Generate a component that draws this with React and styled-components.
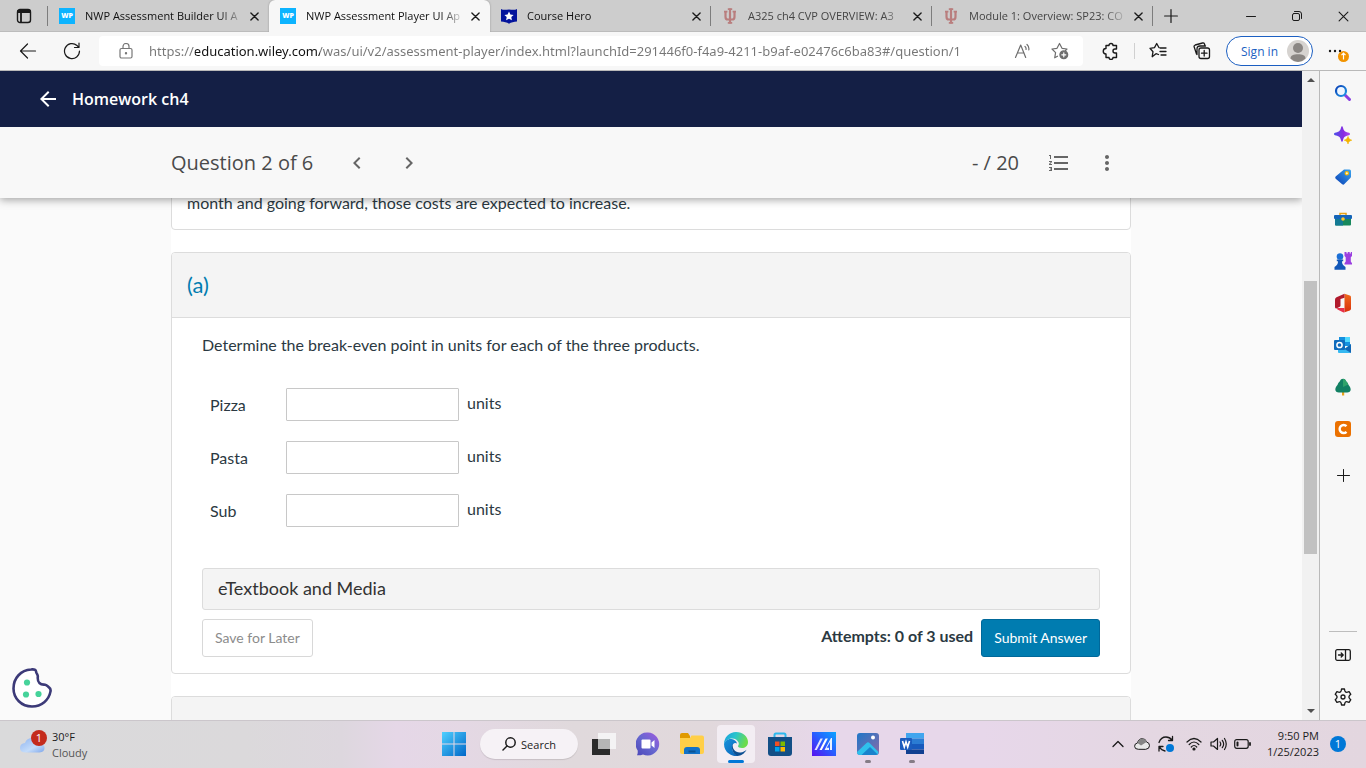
import React from "react";
import styled, { createGlobalStyle } from "styled-components";
import {
  MdArrowBack,
  MdChevronLeft,
  MdChevronRight,
  MdFormatListNumbered,
  MdMoreVert,
} from "react-icons/md";

const UI = `"Open Sans", "Noto Sans", sans-serif`;
const LATO = `Lato, "Open Sans", sans-serif`;

const GlobalStyle = createGlobalStyle`
  * { box-sizing: border-box; }
  body { margin: 0; font-family: ${UI}; overflow: hidden; }
  button, input { font: inherit; color: inherit; }
  button { border: 0; padding: 0; margin: 0; background: none; cursor: pointer; }
  svg { display: block; flex: none; }
`;

const Screen = styled.div`
  height: 100vh;
  display: flex;
  flex-direction: column;
  background: #f7f7f7;
`;

/* ---------- Tab strip ---------- */
const TabStrip = styled.header`
  display: flex;
  height: 32px;
  flex: none;
  background: #cdcdcd;
  box-shadow: inset 0 -1px 0 #bcbcbc;
  font-size: 11px;
  color: #111;
`;
const TabActions = styled.button`
  width: 48px;
  display: flex;
  align-items: center;
  justify-content: center;
`;
const Tab = styled.div`
  flex: 0 1 221px;
  min-width: 0;
  display: flex;
  align-items: center;
  padding: 0 5px 0 11px;
  background: ${(p) => (p.$active ? "#f7f7f7" : "transparent")};
  border-radius: ${(p) => (p.$active ? "6px 6px 0 0" : "0")};
  box-shadow: ${(p) => (p.$active ? "0 0 2px #8c8c8c" : "none")};
  clip-path: ${(p) => (p.$active ? "inset(0 -3px 0 -3px)" : "none")};
`;
const TabLabel = styled.button`
  flex: 1;
  min-width: 0;
  display: flex;
  align-items: center;
  gap: 10px;
  text-align: left;
`;
const TabTitle = styled.span`
  flex: 1;
  min-width: 0;
  overflow: hidden;
  white-space: nowrap;
  line-height: 16px;
  color: ${(p) => (p.$dim ? "#444" : "#111")};
  mask-image: linear-gradient(to right, #000 calc(100% - 24px), transparent);
`;
const TabClose = styled.button`
  width: 20px;
  height: 20px;
  display: flex;
  align-items: center;
  justify-content: center;
`;
const Divider = styled.span`
  width: 1px;
  height: 20px;
  margin: 6px 0 6px -1px;
  flex: none;
  background: ${(p) => (p.$clear ? "transparent" : "#7d7d7d")};
`;
const NewTab = styled.button`
  width: 36px;
  display: flex;
  align-items: center;
  justify-content: center;
`;
const WindowControls = styled.div`
  margin-left: auto;
  display: flex;
`;
const WindowButton = styled.button`
  width: 46px;
  display: flex;
  align-items: center;
  justify-content: center;
`;

/* ---------- Address bar ---------- */
const Toolbar = styled.nav`
  display: flex;
  align-items: center;
  height: 39px;
  flex: none;
  padding: 0 6px;
  background: #f7f7f7;
  border-bottom: 1px solid #b9b9b9;
`;
const ToolButton = styled.button`
  width: ${(p) => p.$w || 44}px;
  height: 30px;
  display: flex;
  align-items: center;
  justify-content: center;
`;
const AddressBar = styled.div`
  flex: 1;
  min-width: 0;
  height: 30px;
  margin: 0 6px 0 5px;
  padding: 0 4px 0 19px;
  display: flex;
  align-items: center;
  background: #fff;
  border-radius: 4px;
`;
const Url = styled.input`
  flex: 1;
  min-width: 0;
  margin-left: 15px;
  padding: 0;
  border: 0;
  outline: 0;
  height: 24px;
  font-family: "Noto Sans", sans-serif;
  font-size: 13px;
  color: #767676;
  -webkit-text-fill-color: transparent;
  background: linear-gradient(to right, #767676 46px, #111 46px, #111 171px, #767676 171px);
  background-clip: text;
  -webkit-background-clip: text;
`;
const ToolDivider = styled.span`
  width: 1px;
  height: 16px;
  margin: 0 1px;
  background: #d0d0d0;
`;
const SignIn = styled.button`
  width: 87px;
  height: 30px;
  margin: 0 3px 0 2px;
  padding: 0 3px 0 14px;
  display: flex;
  align-items: center;
  justify-content: space-between;
  white-space: nowrap;
  border: 1px solid #1c5fc2;
  border-radius: 15px;
  background: #fff;
  color: #1c5fc2;
  font-size: 12px;
`;

/* ---------- Body ---------- */
const Main = styled.div`
  flex: 1;
  min-height: 0;
  display: flex;
`;
const Viewport = styled.main`
  position: relative;
  flex: 1;
  min-width: 0;
  display: flex;
  flex-direction: column;
  background: #fafafa;
`;
const CourseBar = styled.div`
  height: 56px;
  flex: none;
  display: flex;
  align-items: center;
  gap: 12px;
  padding-left: 36px;
  background: #141f45;
  color: #fff;
`;
const CourseTitle = styled.h1`
  margin: 0;
  font-size: 16px;
  font-weight: 600;
`;
const IconButton = styled.button`
  width: ${(p) => p.$w}px;
  height: 40px;
  display: flex;
  align-items: center;
  justify-content: center;
  color: inherit;
`;
const QuestionBar = styled.div`
  position: relative;
  z-index: 1;
  height: 71px;
  flex: none;
  background: #f8f8f8;
  box-shadow: 0 2px 8px rgba(0, 0, 0, 0.35);
  clip-path: inset(0 0 -12px 0);
`;
const QuestionInner = styled.div`
  max-width: 960px;
  height: 100%;
  margin: 0 auto;
  display: flex;
  align-items: center;
  font-size: 20px;
  color: #4a4a4a;
`;
const QuestionTitle = styled.h2`
  margin: 0 24px 0 0;
  font-size: 20px;
  font-weight: 400;
`;
const QuestionNav = styled.div`
  display: flex;
  gap: 12px;
  color: #666;
`;
const QuestionTools = styled.div`
  margin-left: auto;
  display: flex;
  align-items: center;
  color: #666;
`;
const Score = styled.span`
  margin-right: 16px;
  color: #4a4a4a;
`;
const ScrollArea = styled.div`
  flex: 1;
  min-height: 0;
  overflow: hidden;
`;
const Column = styled.div`
  max-width: 960px;
  margin: -24px auto 0;
  display: flex;
  flex-direction: column;
  gap: 22px;
  background: #fff;
  font-family: ${LATO};
  font-size: 16px;
  line-height: 24px;
  color: #2b3942;
`;
const Card = styled.section`
  border: 1px solid #dcdcdc;
  border-radius: 4px;
  background: #fff;
  overflow: hidden;
`;
const Intro = styled.p`
  margin: 0;
  padding: 16px 15px 14px;
`;
const CardHeader = styled.div`
  height: 65px;
  padding: 0 15px;
  display: flex;
  align-items: center;
  background: #f4f4f4;
  border-bottom: 1px solid #dcdcdc;
`;
const PartTitle = styled.h3`
  margin: 0;
  font-size: 22px;
  font-weight: 400;
  color: #007cb0;
`;
const CardBody = styled.form`
  padding: 15px 30px 16px;
`;
const Prompt = styled.p`
  margin: 0 0 21px;
`;
const AnswerTable = styled.table`
  border-collapse: collapse;
  margin: 0 0 31px 8px;
  th, td { height: 53px; padding: 0; vertical-align: middle; text-align: left; font-weight: 400; }
  th { width: 76px; }
  td:last-child { padding-bottom: 4px; }
`;
const Answer = styled.input`
  display: block;
  width: 173px;
  height: 33px;
  margin-right: 8px;
  padding: 4px 8px;
  border: 1px solid #c8c8c8;
  border-radius: 1px;
  background: #fff;
`;
const Resource = styled.button`
  display: block;
  width: 100%;
  height: 42px;
  margin-bottom: 9px;
  padding: 0 15px 2px;
  text-align: left;
  font-size: 18px;
  border: 1px solid #dcdcdc;
  border-radius: 3px;
  background: #f4f4f4;
  color: #333;
`;
const Actions = styled.div`
  display: flex;
  align-items: center;
`;
const ActionButton = styled.button`
  height: 38px;
  padding: 0 12px;
  font-size: 14px;
  border-radius: 3px;
  border: 1px solid ${(p) => (p.$primary ? "#00689a" : "#d8d8d8")};
  background: ${(p) => (p.$primary ? "#007cb0" : "#fff")};
  color: ${(p) => (p.$primary ? "#fff" : "#8c8c8c")};
`;
const Attempts = styled.strong`
  margin: 0 8px 0 auto;
  padding-bottom: 4px;
`;
const CookieButton = styled.button`
  position: absolute;
  left: 12px;
  bottom: 12px;
`;

/* ---------- Scrollbar and sidebar ---------- */
const ScrollTrack = styled.div`
  width: 17px;
  flex: none;
  display: flex;
  flex-direction: column;
  align-items: center;
  background: #f1f1f1;
`;
const ScrollArrow = styled.span`
  height: 17px;
  flex: none;
  display: flex;
  align-items: center;
`;
const ScrollSpace = styled.span`
  flex: ${(p) => p.$share} 1 0;
`;
const ScrollThumb = styled.span`
  flex: 273 1 0;
  width: 13px;
  background: #c1c1c1;
`;
const Sidebar = styled.aside`
  width: 47px;
  flex: none;
  padding: 1px 0 2px;
  display: flex;
  flex-direction: column;
  align-items: center;
  border-left: 1px solid #b9b9b9;
  background: #f7f7f7;
`;
const SideButton = styled.button`
  width: 42px;
  height: ${(p) => p.$h || 42}px;
  flex: none;
  display: flex;
  align-items: center;
  justify-content: center;
`;
const SideRule = styled.span`
  width: 28px;
  height: 1px;
  flex: none;
  margin: auto 0 2px;
  background: #bdbdbd;
`;

/* ---------- Taskbar ---------- */
const Taskbar = styled.footer`
  height: 48px;
  flex: none;
  display: grid;
  grid-template-columns: 1fr auto 1fr;
  align-items: center;
  box-shadow: inset 0 1px 0 #cbc6cb;
  background: linear-gradient(to right, #dadadb 0, #dbd9db 18%, #ddd7de 25%, #e5d7e7 29%, #e4d8e4 34%, #e0d9dc 42%, #e1d8dc 52%, #e7d7ea 61%, #e7d7ea 72%, #e4d7e2 84%, #e3d6df 100%);
  font-size: 11px;
  color: #1c1c1c;
`;
const Weather = styled.button`
  justify-self: start;
  display: flex;
  align-items: center;
  gap: 4px;
  padding: 1px 0 0 19px;
  text-align: left;
  line-height: 16px;
`;
const WeatherLine = styled.span`
  display: block;
  color: ${(p) => (p.$muted ? "#555" : "#1c1c1c")};
`;
const Apps = styled.div`
  display: flex;
  align-items: center;
`;
const AppButton = styled.button`
  position: relative;
  width: 38px;
  height: 38px;
  margin: 0 3px;
  display: flex;
  align-items: center;
  justify-content: center;
  border-radius: 4px;
  background: ${(p) => (p.$active ? "#f3edf3" : "transparent")};
  &::after {
    content: "";
    position: absolute;
    bottom: 0;
    width: ${(p) => (p.$active ? 16 : 6)}px;
    height: 3px;
    border-radius: 2px;
    background: ${(p) => (p.$active ? "#0078d7" : p.$running ? "#857c86" : "transparent")};
  }
`;
const SearchPill = styled.button`
  width: 98px;
  height: 30px;
  margin: 0 4px;
  display: flex;
  align-items: center;
  justify-content: center;
  gap: 5px;
  border-radius: 15px;
  background: #f6f2f6;
  box-shadow: 0 1px 1px rgba(0, 0, 0, 0.12);
`;
const Tray = styled.div`
  justify-self: end;
  display: flex;
  align-items: center;
  padding-right: 20px;
`;
const TrayGroup = styled.div`
  display: flex;
  margin-right: ${(p) => p.$gap || 0}px;
`;
const TrayButton = styled.button`
  width: 24px;
  height: 32px;
  display: flex;
  align-items: center;
  justify-content: center;
`;
const Clock = styled.time`
  width: 65px;
  text-align: right;
  line-height: 16px;
`;
const Count = styled.span`
  width: 16px;
  height: 16px;
  margin-left: 11px;
  border-radius: 50%;
  background: #0078d7;
  color: #fff;
  text-align: center;
  font-size: 11px;
  line-height: 16px;
`;

/* ---------- Drawings ---------- */
const Line = ({ w = 20, h, vb, sw = 1.2, color = "#1a1a1a", children }) => (
  <svg width={w} height={h || w} viewBox={vb || `0 0 ${w} ${h || w}`} fill="none" stroke={color}
    strokeWidth={sw} strokeLinecap="round" strokeLinejoin="round" aria-hidden="true">
    {children}
  </svg>
);
const Art = ({ w = 18, h, vb, children }) => (
  <svg width={w} height={h || w} viewBox={vb || `0 0 ${w} ${h || w}`} aria-hidden="true">
    {children}
  </svg>
);

const CloseX = ({ s = 9, sw = 1.5 }) => (
  <Line w={s} vb="0 0 10 10" sw={sw}><path d="M1 1l8 8M9 1L1 9" /></Line>
);

const WpMark = styled.span`
  width: 16px;
  height: 16px;
  flex: none;
  background: #0db4ff;
  color: #fff;
  font-size: 7px;
  font-weight: 800;
  line-height: 16px;
  text-align: center;
`;
const HeroMark = () => (
  <Art w={16}>
    <path d="M0 1c3 1.6 5.500 .4 8 .4S13 2.600 16 1v12.500c-3 .2-6 .8-8 2.300-2-1.500-5-2.100-8-2.300z" fill="#04149c" />
    <path d="M8 3.600l1.400 2.900 3.200.4-2.300 2.200.6 3.200L8 10.700l-2.900 1.600.6-3.200-2.300-2.200 3.200-.4z" fill="#fff" />
  </Art>
);
const TridentMark = () => (
  <Art w={16}>
    <g fill="none" stroke="#b97e7e" strokeWidth="2.200">
      <path d="M8 .5v15M3.500 3.500v5.200c0 2 1 2.800 2.300 2.800h4.400c1.300 0 2.300-.8 2.300-2.800V3.500" />
    </g>
    <path d="M5.800.3h4.400v1.600H5.800zM2 2.800h3.400v1.600H2zM10.600 2.800H14v1.600h-3.400zM5.800 14h4.400v1.700H5.800z" fill="#b97e7e" />
  </Art>
);

const tabs = [
  { title: "NWP Assessment Builder UI A", icon: <WpMark>WP</WpMark>, hideDivider: true },
  { title: "NWP Assessment Player UI Ap", icon: <WpMark>WP</WpMark>, active: true, hideDivider: true },
  { title: "Course Hero", icon: <HeroMark /> },
  { title: "A325 ch4 CVP OVERVIEW: A3", icon: <TridentMark />, dim: true },
  { title: "Module 1: Overview: SP23: CO", icon: <TridentMark />, dim: true },
];

const Avatar = () => (
  <Art w={22}>
    <circle cx="11" cy="11" r="11" fill="#d6d3d0" />
    <circle cx="11" cy="8" r="5" fill="#8a8683" />
    <path d="M3.500 18.500c0-3 3-4.300 7.500-4.300s7.500 1.300 7.500 4.300A11 11 0 0 1 11 22a11 11 0 0 1-7.500-3.500z" fill="#8a8683" />
  </Art>
);

const sideIcons = [
  ["Search", <Art key="s">
    <defs><linearGradient id="sg" x2="1" y2="1"><stop stopColor="#0a3fb5" /><stop offset="1" stopColor="#1f9be8" /></linearGradient></defs>
    <path d="M11 11l4.500 4.500" stroke="#8a3de0" strokeWidth="3" strokeLinecap="round" />
    <circle cx="7" cy="7" r="5" fill="#eef6ff" stroke="url(#sg)" strokeWidth="2.200" />
  </Art>],
  ["Discover", <Art key="d">
    <defs><linearGradient id="dg" x2="1"><stop stopColor="#4a50e8" /><stop offset=".6" stopColor="#8a2be2" /><stop offset="1" stopColor="#b04cf0" /></linearGradient></defs>
    <path d="M8 .3c.5 0 .8.6 1 1.500.8 3 1.700 3.900 5 4.700 1.400.3 2 .8 2 1.500s-.6 1.200-2 1.500c-3.300.8-4.200 1.700-5 4.700-.2.900-.5 1.500-1 1.500s-.8-.6-1-1.500c-.8-3-1.700-3.900-5-4.700C.6 9.200 0 8.700 0 8s.6-1.200 2-1.500c3.300-.8 4.200-1.700 5-4.700.2-.9.5-1.500 1-1.500z" fill="url(#dg)" />
    <path d="M14 10.500c.5 2.100 1.300 3 3.700 3.700-2.400.7-3.200 1.500-3.700 3.700-.5-2.200-1.300-3-3.700-3.700 2.400-.7 3.200-1.600 3.700-3.700z" fill="#f4b400" stroke="#f4b400" strokeWidth=".7" />
  </Art>],
  ["Shopping", <Art key="t">
    <defs><linearGradient id="tg" x1="1" x2="0" y2="1"><stop stopColor="#3aa4ee" /><stop offset="1" stopColor="#0a3fb5" /></linearGradient></defs>
    <path d="M10 1.500h5.500q1.500 0 1.500 1.500v5.500q0 .8-.6 1.400l-6 6.200q-1 1-2.200.1L1.700 10.700q-1-1-.1-2.200z" fill="url(#tg)" />
    <circle cx="12.800" cy="5.300" r="1.700" fill="#fff3c4" stroke="#f0b400" strokeWidth="1.100" />
  </Art>],
  ["Tools", <Art key="b">
    <path d="M6 5V3.500h6V5" fill="none" stroke="#e8a317" strokeWidth="1.500" />
    <rect x="0" y="5" width="18" height="4" rx="1" fill="#1464b8" />
    <path d="M1 9h16v5.500q0 1-1 1H2q-1 0-1-1z" fill="#17885c" /><path d="M1 9h8v6.500H2q-1 0-1-1z" fill="#137a94" />
    <circle cx="9" cy="9" r="1.800" fill="#ffc629" />
  </Art>],
  ["Games", <Art key="g">
    <path d="M10.500 0h2v1.500h1.200V0h2v1.500h1.100V0H18v4l-1.200 1.200v4.300l1.200 1.700v1.300h-7.500v-1.300l1.200-1.700V5.200L10.500 4z" fill="#9b3fe0" />
    <circle cx="6" cy="4.500" r="3.300" fill="#1b6fd6" />
    <path d="M2.800 7.500h6.400V9.300H8c0 2 .6 3.500 2.200 4.700l1.300 1v2.800H.5V15l1.300-1C3.400 12.800 4 11.300 4 9.300H2.800z" fill="#1257b8" />
  </Art>],
  ["Office", <Art key="o" h={20}>
    <defs><linearGradient id="og" x2="0" y2="1"><stop stopColor="#f06a1c" /><stop offset="1" stopColor="#d8300a" /></linearGradient></defs>
    <path d="M10.500.8l5.300 1.700q1.200.4 1.200 1.700v11.600q0 1.300-1.200 1.700l-5.300 1.700z" fill="url(#og)" />
    <path d="M10.500.8v4L6.500 6v6.700q0 .7-.7 1l-2.900 1.500Q1 16 1 14V6.800q0-1.700 1.500-2.500z" fill="#b01a2c" />
    <path d="M3.500 15h7v4.200q-1 .4-2-.1l-5-2.500q-1.200-.9 0-1.600z" fill="#e8304a" />
  </Art>],
  ["Outlook", <Art key="ol">
    <path d="M5 1h11v9H5z" fill="#1490df" /><path d="M11 1h5v5h-5z" fill="#50d9ff" /><path d="M4 9l6.500 4L17 8v8q0 1-1 1H5q-1 0-1-1z" fill="#35b8f1" />
    <path d="M10.500 13L17 8v9z" fill="#1066b5" />
    <rect x="0" y="4" width="11" height="10" rx="1" fill="#0f6cbd" />
    <circle cx="5.500" cy="9" r="2.600" fill="none" stroke="#fff" strokeWidth="1.500" />
  </Art>],
  ["Tree", <Art key="tr">
    <path d="M8 13h2.200v4.500H8z" fill="#e9a21b" />
    <path d="M9 .8c1.400 0 2.400.9 3 2.200.5 1 2.100 2 2.300 3.500.2 1 2.400 2.300 2.400 4.800 0 2.200-1.600 3.200-3.500 3.200H4.800c-1.900 0-3.500-1-3.500-3.200 0-2.500 2.200-3.800 2.400-4.800C3.900 5 5.500 4 6 3 6.600 1.700 7.600.8 9 .8z" fill="#128063" />
    <path d="M9 .8c1.400 0 2.400.9 3 2.200.5 1 2.100 2 2.300 3.500L9 9z" fill="#2fa36b" />
  </Art>],
  ["Chegg", <Art key="c" w={16}>
    <rect width="16" height="16" rx="3" fill="#eb7100" />
    <path d="M11.500 5.200A4 4 0 1 0 11.500 10.800" fill="none" stroke="#fff" strokeWidth="2.400" />
  </Art>],
];

const Windows = () => (
  <Art w={24}>
    <defs><linearGradient id="wg" x2="1" y2="1"><stop stopColor="#4fd0ff" /><stop offset="1" stopColor="#0067c8" /></linearGradient></defs>
    <path d="M0 0h11.500v11.500H0zM12.500 0H24v11.500H12.500zM0 12.500h11.500V24H0zM12.500 12.500H24V24H12.500z" fill="url(#wg)" />
  </Art>
);

const apps = [
  ["Task view", <Art key="tv" w={24}><rect x="0" y="7" width="18" height="16" fill="#2b2b2b" /><rect x="6" y="1" width="18" height="16" fill="#f5f5f5" opacity=".92" /><rect x="6" y="7" width="12" height="10" fill="#b5b5b5" /></Art>],
  ["Chat", <Art key="ch" w={24}>
    <defs><linearGradient id="cg" x1="1" x2="0" y2="1"><stop stopColor="#a15be0" /><stop offset=".5" stopColor="#6768d0" /><stop offset="1" stopColor="#4b46b8" /></linearGradient></defs>
    <path d="M12 .5A11.500 11.500 0 1 1 7 22.500c-2 .8-4 1-6 .8.800-1.600.9-3.300.6-5A11.500 11.500 0 0 1 12 .5z" fill="url(#cg)" />
    <rect x="5.500" y="7.500" width="9" height="9" rx="1" fill="#fff" /><path d="M15.500 10.500l3-2.500v8l-3-2.500z" fill="#fff" />
  </Art>],
  ["File Explorer", <Art key="fe" w={24}>
    <path d="M0 3q0-2 2-2h6l2 3v6H0z" fill="#e09a00" /><path d="M0 6h10l1.500-2.500H22q2 0 2 2V20q0 2-2 2H2q-2 0-2-2z" fill="#ffcf48" />
    <path d="M4 22v-4q0-3 3-3h10q3 0 3 3v4z" fill="#1272c8" /><path d="M8.500 18.500h7v2h-7z" fill="#0b5394" />
  </Art>],
  ["Edge", <Art key="ed" w={24}>
    <defs>
      <linearGradient id="e1" x2="1" y2=".3"><stop stopColor="#1a9de0" /><stop offset=".5" stopColor="#2ac4cc" /><stop offset="1" stopColor="#6cdc4c" /></linearGradient>
      <linearGradient id="e2" y2="1"><stop stopColor="#1793dc" /><stop offset="1" stopColor="#0b62b8" /></linearGradient>
    </defs>
    <path d="M0 12A12 12 0 0 1 12 0c7 0 12 4.700 12 10 0 4-3 6-6 6-2.500 0-4.200-.9-4-2 .8-1 1-2 .6-3.400C13.500 7.500 10 6 7 6.500 3.500 7 .8 9.300 0 12z" fill="url(#e1)" />
    <path d="M0 12c.8-3.200 4-5.500 7.500-5 2.500.3 5 2 5.500 4.500-2-1.500-5 0-5 4 0 4 3 7.500 6.500 8.200A12 12 0 0 1 0 12z" fill="url(#e2)" />
    <path d="M9 11.500c-1.500 5 2.500 9.500 7.500 9 2.500-.2 4.500-1.300 6-2.700C20.500 21.700 17 24 13.500 24 8.500 22 6.500 15 9 11.500z" fill="#0c4f92" />
  </Art>, "active"],
  ["Microsoft Store", <Art key="st" w={24}>
    <path d="M6.500 6V3q0-1.500 1.500-1.500h8q1.500 0 1.500 1.500v3" fill="none" stroke="#2cb9ee" strokeWidth="2" />
    <path d="M0 5h24v16q0 3-3 3H3q-3 0-3-3z" fill="#134f86" />
    <path d="M7 9.500h4.500V14H7z" fill="#f25022" /><path d="M12.500 9.500H17V14h-4.500z" fill="#7fba00" /><path d="M7 15h4.500v4.500H7z" fill="#00a4ef" /><path d="M12.500 15H17v4.500h-4.500z" fill="#ffb900" />
  </Art>],
  ["MyASUS", <Art key="as" w={24}>
    <defs><linearGradient id="ag" x1="1" x2="0" y2="1"><stop stopColor="#0aa4ff" /><stop offset=".5" stopColor="#2a5cff" /><stop offset="1" stopColor="#5a10ef" /></linearGradient></defs>
    <rect width="24" height="24" fill="url(#ag)" />
    <path d="M2.500 18l6-11.500h2.300L4.800 18z" fill="#fff" opacity=".85" /><path d="M7.500 18l6-11.500h2.300L9.800 18z" fill="#fff" />
    <path d="M12.500 18l6.500-12h1v12h-2v-8l-3.300 5.700h2.300V18z" fill="#fff" opacity=".9" />
  </Art>],
  ["Photos", <Art key="ph" w={24}>
    <defs><linearGradient id="pg" x2="1" y2="1"><stop stopColor="#1f77c8" /><stop offset="1" stopColor="#8a6aa8" /></linearGradient></defs>
    <rect x="1" y="1" width="22" height="22" rx="3" fill="url(#pg)" /><path d="M1 20l9.500-9q1.500-1.300 3 0l9 9q0 3-3 3H4q-3 0-3-3z" fill="#2fc0ec" />
    <path d="M5.500 23l8.500-8 7.500 7.300L20 23z" fill="#1a82cc" /><circle cx="17" cy="5.500" r="2" fill="#fff" />
  </Art>, "running"],
  ["Word", <Art key="wd" w={24}>
    <path d="M6 1h18v5.500H6z" fill="#41a5ee" /><path d="M6 6.500h18V12H6z" fill="#2b7cd3" /><path d="M6 12h18v5.500H6z" fill="#185abd" /><path d="M6 17.500h18V22H6z" fill="#103f91" />
    <rect x="0" y="6" width="12" height="12" rx="1" fill="#1b5cbe" />
    <path d="M2.500 9l1.800 6L6 9.800 7.700 15l1.800-6" fill="none" stroke="#fff" strokeWidth="1.600" />
  </Art>, "running"],
];

const products = ["Pizza", "Pasta", "Sub"];

export default function App() {
  return (
    <Screen>
      <GlobalStyle />
      <TabStrip>
        <TabActions aria-label="Tab actions">
          <Line w={16} sw={1.4}><rect x="1.500" y="1.500" width="13" height="13" rx="2.500" /><path d="M2 4h12M2 3h12M5 5v9" strokeWidth="1.800" /></Line>
        </TabActions>
        <Divider />
        {tabs.map((t) => (
          <React.Fragment key={t.title}>
            <Tab $active={t.active}>
              <TabLabel>{t.icon}<TabTitle $dim={t.dim}>{t.title}</TabTitle></TabLabel>
              <TabClose aria-label={"Close " + t.title}><CloseX /></TabClose>
            </Tab>
            <Divider $clear={t.hideDivider} />
          </React.Fragment>
        ))}
        <NewTab aria-label="New tab"><Line w={14}><path d="M7 .6v12.800M.6 7h12.800" /></Line></NewTab>
        <WindowControls>
          <WindowButton aria-label="Minimize"><Line w={10} sw={1}><path d="M.5 5.500h9" /></Line></WindowButton>
          <WindowButton aria-label="Restore"><Line w={10} sw={1}><rect x=".5" y="2.500" width="7" height="7" rx="1.500" /><path d="M2.500.5H7Q9.500.5 9.500 3v4.500" /></Line></WindowButton>
          <WindowButton aria-label="Close window"><CloseX s={11} sw={1} /></WindowButton>
        </WindowControls>
      </TabStrip>

      <Toolbar>
        <ToolButton aria-label="Back"><Line w={18}><path d="M16.500 9h-15M8.500 2L1.500 9l7 7" /></Line></ToolButton>
        <ToolButton aria-label="Refresh"><Line w={18}><path d="M16.500 9A7.500 7.500 0 1 1 14 3.500l1.800 1.800M16 1v4.500h-4.500" /></Line></ToolButton>
        <AddressBar>
          <Line w={16} color="#777"><rect x="2" y="5.500" width="12" height="9.500" rx="1.500" /><path d="M5 5.500V3.500a3 3 0 0 1 6 0v2" /><circle cx="8" cy="10.200" r=".6" fill="#777" /></Line>
          <Url aria-label="Address" defaultValue="https://education.wiley.com/was/ui/v2/assessment-player/index.html?launchId=291446f0-f4a9-4211-b9af-e02476c6ba83#/question/1" />
          <ToolButton $w={36} aria-label="Read aloud">
            <Line w={18} color="#6e6e6e"><path d="M1.500 15.500L6.700 3l5 12.500M3.300 11h6.800M11 4.500a3 3 0 0 1 1 3M13 2.500a6 6 0 0 1 1.800 5.500" /></Line>
          </ToolButton>
          <ToolButton $w={38} aria-label="Add to favorites">
            <Line w={18} color="#6e6e6e"><path d="M6.500 14.200L3.700 15.800l.9-5.200L1 7l5-.7L8.500 1.500 11 6.300l5 .7-1.500 1.500" /><circle cx="12.800" cy="12.800" r="3.900" fill="#6e6e6e" /><path d="M12.800 10.800v4M10.800 12.800h4" stroke="#fff" /></Line>
          </ToolButton>
        </AddressBar>
        <ToolButton aria-label="Extensions">
          <Line w={18} sw={1.4}><path d="M4 5V3.500H7a2 2 0 0 1 4 0h3.500V7H13a2 2 0 0 0 0 4h1.500v4.500H11a2 2 0 0 1-4 0H4V12A2.600 2.600 0 0 1 4 6.500z" /></Line>
        </ToolButton>
        <ToolDivider />
        <ToolButton aria-label="Favorites">
          <Line w={18} sw={1.3}><path d="M9.500 12.500L7 11.700l-3.800 3 .8-5L1 6.300l4.500-.7L7.700 1.500 9.900 5.500M11 6h6M11 9.500h6M12 13h5" /></Line>
        </ToolButton>
        <ToolButton aria-label="Collections">
          <Line w={18} sw={1.3}><rect x="6" y="6" width="10.500" height="10.500" rx="2" /><path d="M11.200 8.500v5.500M8.500 11.200h5.500M3.500 12L1.200 5q-.5-1.500 1-2L9.500 1q1.500-.3 2 1l.3 1M4 12.500V7q0-3 3-3h5.500" /></Line>
        </ToolButton>
        <SignIn>Sign in<Avatar /></SignIn>
        <ToolButton aria-label="Settings and more">
          <Art w={22} h={24}>
            <circle cx="3" cy="12" r="1.200" fill="#1a1a1a" /><circle cx="8" cy="12" r="1.200" fill="#1a1a1a" /><circle cx="13" cy="12" r="1.200" fill="#1a1a1a" />
            <circle cx="16.500" cy="17.500" r="5.500" fill="#f29400" /><path d="M16.500 20.500v-6M14.500 16.200l2-2 2 2" fill="none" stroke="#fff" strokeWidth="1.200" />
          </Art>
        </ToolButton>
      </Toolbar>

      <Main>
        <Viewport>
          <CourseBar>
            <IconButton $w={24} aria-label="Back to course"><MdArrowBack size={24} /></IconButton>
            <CourseTitle>Homework ch4</CourseTitle>
          </CourseBar>
          <QuestionBar>
            <QuestionInner>
              <QuestionTitle>Question 2 of 6</QuestionTitle>
              <QuestionNav>
                <IconButton $w={40} aria-label="Previous question"><MdChevronLeft size={24} /></IconButton>
                <IconButton $w={40} aria-label="Next question"><MdChevronRight size={24} /></IconButton>
              </QuestionNav>
              <QuestionTools>
                <Score>- / 20</Score>
                <IconButton $w={48} aria-label="Question list"><MdFormatListNumbered size={24} /></IconButton>
                <IconButton $w={48} aria-label="More options"><MdMoreVert size={24} /></IconButton>
              </QuestionTools>
            </QuestionInner>
          </QuestionBar>
          <ScrollArea>
            <Column>
              <Card><Intro>month and going forward, those costs are expected to increase.</Intro></Card>
              <Card>
                <CardHeader><PartTitle>(a)</PartTitle></CardHeader>
                <CardBody onSubmit={(e) => e.preventDefault()}>
                  <Prompt>Determine the break-even point in units for each of the three products.</Prompt>
                  <AnswerTable>
                    <tbody>
                      {products.map((p) => (
                        <tr key={p}>
                          <th scope="row"><label htmlFor={p}>{p}</label></th>
                          <td><Answer id={p} type="text" /></td>
                          <td>units</td>
                        </tr>
                      ))}
                    </tbody>
                  </AnswerTable>
                  <Resource type="button">eTextbook and Media</Resource>
                  <Actions>
                    <ActionButton type="button">Save for Later</ActionButton>
                    <Attempts>Attempts: 0 of 3 used</Attempts>
                    <ActionButton type="submit" $primary>Submit Answer</ActionButton>
                  </Actions>
                </CardBody>
              </Card>
              <Card><CardHeader /></Card>
            </Column>
          </ScrollArea>
          <CookieButton aria-label="Cookie preferences">
            <Art w={40}>
              <path d="M19 1.500c1.800-.2 3.400 0 4.200.4.900.5.800 1.800 1.200 2.800.6 1.400 1.600 2.200 1.400 4-.2 2.400-.4 4.500 1.600 6.300 2 2 3.800 1.500 5.800 1.700 2 .3 2.500 1.700 3.800 2.700 1.500 1.100 1.900 2 1.500 4C37 32 29.500 38.500 20 38.500 9.500 38.500 1.500 30.500 1.500 20.500 1.500 10 9 2 19 1.500z" fill="#fff" stroke="#3c3a78" strokeWidth="2.600" />
              <circle cx="15" cy="14.500" r="3.100" fill="#46d39a" /><circle cx="14" cy="26.500" r="3.100" fill="#46d39a" /><circle cx="26.500" cy="26" r="3.100" fill="#46d39a" />
            </Art>
          </CookieButton>
        </Viewport>
        <ScrollTrack>
          <ScrollArrow><Art w={8} h={5}><path d="M0 5l4-4 4 4z" fill="#505050" /></Art></ScrollArrow>
          <ScrollSpace $share={193} />
          <ScrollThumb />
          <ScrollSpace $share={149} />
          <ScrollArrow><Art w={8} h={5}><path d="M0 0l4 4 4-4z" fill="#505050" /></Art></ScrollArrow>
        </ScrollTrack>
        <Sidebar>
          {sideIcons.map(([name, icon]) => <SideButton key={name} aria-label={name}>{icon}</SideButton>)}
          <SideButton $h={50} aria-label="Customize sidebar"><Line w={13} sw={1}><path d="M6.500 .5v12M.5 6.500h12" /></Line></SideButton>
          <SideRule />
          <SideButton aria-label="Hide sidebar">
            <Line w={16} h={12} sw={1.3}><rect x=".7" y=".7" width="14.600" height="10.600" rx="1.500" /><path d="M10.500 1v10M3.500 6H8M6.200 4l2 2-2 2" /></Line>
          </SideButton>
          <SideButton aria-label="Sidebar settings">
            <Line w={18} sw={1.3}>
              <path d="M7.200 2.700L7.500 1h3l.3 1.700q.6 2 2.600 1.500l1.700-.6 1.700 2.700-1.300 1.200q-1.300 1.500 0 3l1.300 1.200-1.700 2.700-1.700-.6q-2-.5-2.600 1.500L10.500 17h-3l-.3-1.700q-.6-2-2.600-1.500l-1.700.6-1.700-2.700 1.300-1.200q1.300-1.500 0-3L1.200 6.300l1.700-2.700 1.700.6q2 .5 2.600-1.500z" />
              <circle cx="9" cy="9" r="2" />
            </Line>
          </SideButton>
        </Sidebar>
      </Main>

      <Taskbar>
        <Weather>
          <Art w={29} h={30}>
            <defs><linearGradient id="cl" y2="1"><stop stopColor="#8fb4f0" /><stop offset=".6" stopColor="#c4dcfa" /><stop offset="1" stopColor="#7ea6ea" /></linearGradient></defs>
            <path d="M7 22.500q-6 0-6-4.500 0-4.500 5-5 1.500-5 7.500-5 6 0 7.500 5 4.500 1 4.500 5t-5 4.500z" fill="url(#cl)" />
            <circle cx="20" cy="6" r="0" fill="#c42b1c" />
            <circle cx="20" cy="8" r="8" fill="#c42b1c" />
            <text x="20" y="12" textAnchor="middle" fontSize="11" fill="#fff">1</text>
          </Art>
          <span><WeatherLine>30°F</WeatherLine><WeatherLine $muted>Cloudy</WeatherLine></span>
        </Weather>
        <Apps>
          <AppButton aria-label="Start"><Windows /></AppButton>
          <SearchPill>
            <Line w={14} sw={1.5}><circle cx="8.500" cy="5.500" r="4.700" /><path d="M5 9L1 13" /></Line>
            Search
          </SearchPill>
          {apps.map(([name, icon, state]) => (
            <AppButton key={name} aria-label={name} $active={state === "active"} $running={state === "running"}>{icon}</AppButton>
          ))}
        </Apps>
        <Tray>
          <TrayGroup $gap={4}>
            <TrayButton aria-label="Show hidden icons"><Line w={12} sw={1.3}><path d="M1 8.500l5-5 5 5" /></Line></TrayButton>
            <TrayButton aria-label="OneDrive">
              <Line w={16} h={12} sw={1}><path d="M4 11.300q-3.400 0-3.400-3T3.500 5Q4.500.7 8.200.7T12.500 4q3 .5 3 3.700T12 11.300z" fill="#e8e8e8" /><path d="M3.500 5Q4.500.7 8.200.7T12.500 4L7 7.500z" fill="#858585" stroke="none" /></Line>
            </TrayButton>
            <TrayButton aria-label="Updates">
              <Line w={18} sw={1.3}><path d="M2 7.500Q4 2 9 2q3.500 0 6 3M15.500 1.500V5.500H11.500M8 16q-3.500-.5-5.500-4M2 16v-4.500h4" /><circle cx="13" cy="13" r="4" fill="#0078d7" stroke="none" /></Line>
            </TrayButton>
          </TrayGroup>
          <TrayGroup>
            <TrayButton aria-label="Network">
              <Line w={16}><path d="M1 6q7-7 14 0M3.200 8.500q4.800-5 9.600 0M5.300 11q2.700-3 5.400 0" /><circle cx="8" cy="13" r="1" fill="#1a1a1a" /></Line>
            </TrayButton>
            <TrayButton aria-label="Volume">
              <Line w={17} h={14}><path d="M1 5h2.500L7.500 1.500v11L3.500 9H1zM10 5q1.500 2 0 4M12.300 3.300q2.700 3.700 0 7.400M14.500 1.500q3.500 5.500 0 11" /></Line>
            </TrayButton>
            <TrayButton aria-label="Battery">
              <Line w={17} h={10}><rect x=".7" y=".7" width="13.500" height="8.600" rx="2" /><path d="M16 4v2" strokeWidth="1.800" /><path d="M3.500 3.500v3" strokeWidth="2" /></Line>
            </TrayButton>
          </TrayGroup>
          <Clock>9:50 PM<br />1/25/2023</Clock>
          <Count>1</Count>
        </Tray>
      </Taskbar>
    </Screen>
  );
}
